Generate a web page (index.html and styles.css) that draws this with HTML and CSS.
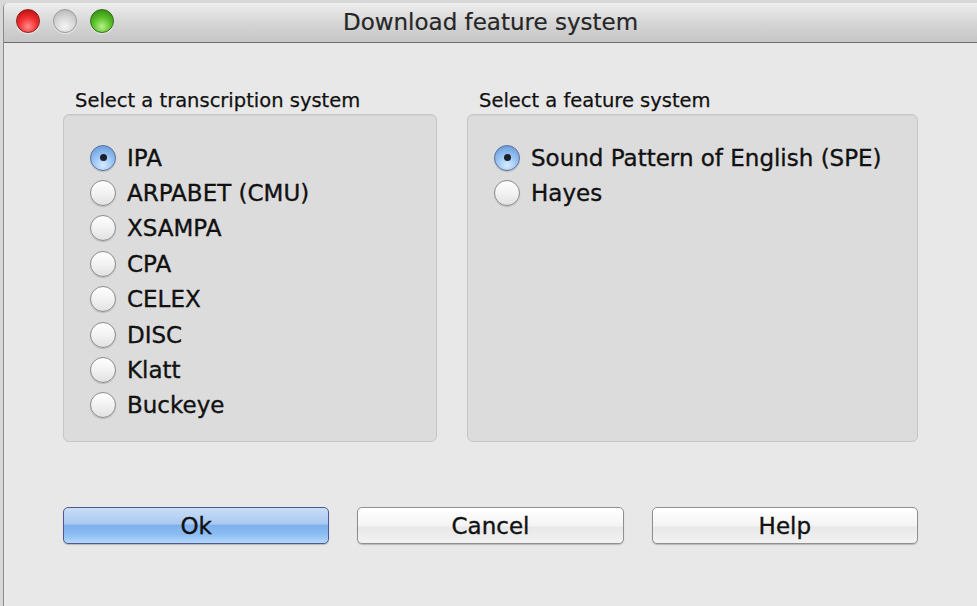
FILE: index.html
```html
<!DOCTYPE html>
<html>
<head>
<meta charset="utf-8">
<link rel="stylesheet" href="styles.css">
</head>
<body>
<div class="window">
  <div class="titlebar">
    <div class="lights">
      <span class="light red"></span>
      <span class="light grey"></span>
      <span class="light green"></span>
    </div>
    <div class="title">Download feature system</div>
  </div>
  <div class="content">
    <div class="groups">
      <div class="group left">
        <div class="group-label">Select a transcription system</div>
        <div class="group-box">
          <div class="radio-row"><span class="radio checked"></span><span>IPA</span></div>
          <div class="radio-row"><span class="radio"></span><span>ARPABET (CMU)</span></div>
          <div class="radio-row"><span class="radio"></span><span>XSAMPA</span></div>
          <div class="radio-row"><span class="radio"></span><span>CPA</span></div>
          <div class="radio-row"><span class="radio"></span><span>CELEX</span></div>
          <div class="radio-row"><span class="radio"></span><span>DISC</span></div>
          <div class="radio-row"><span class="radio"></span><span>Klatt</span></div>
          <div class="radio-row"><span class="radio"></span><span>Buckeye</span></div>
        </div>
      </div>
      <div class="group right">
        <div class="group-label">Select a feature system</div>
        <div class="group-box">
          <div class="radio-row"><span class="radio checked"></span><span>Sound Pattern of English (SPE)</span></div>
          <div class="radio-row"><span class="radio"></span><span>Hayes</span></div>
        </div>
      </div>
    </div>
    <div class="buttons">
      <button class="btn default">Ok</button>
      <button class="btn">Cancel</button>
      <button class="btn">Help</button>
    </div>
  </div>
</div>
</body>
</html>
```

FILE: styles.css
```css
html, body {
  margin: 0;
  padding: 0;
}
body {
  width: 977px;
  height: 606px;
  background: #d8d8d8;
  font-family: "DejaVu Sans", "Lucida Grande", sans-serif;
  color: #111111;
  overflow: hidden;
}
.window {
  margin: 3px 0 0 3px;
  height: 603px;
  background: #e8e8e8;
  border-radius: 5px 0 0 0;
  border-left: 1px solid #8a8a8a;
  box-sizing: border-box;
  overflow: hidden;
}
.titlebar {
  position: relative;
  height: 40px;
  background: linear-gradient(#eeeeee, #d6d6d6 50%, #c6c6c6);
  border-bottom: 1px solid #6f6f6f;
  box-sizing: border-box;
  display: flex;
  align-items: center;
  justify-content: center;
}
.lights {
  position: absolute;
  left: 12px;
  top: 6px;
  display: flex;
  gap: 13px;
}
.light {
  width: 24px;
  height: 24px;
  border-radius: 50%;
  box-sizing: border-box;
  box-shadow: 0 1px 1px rgba(255,255,255,0.6);
}
.red {
  background: radial-gradient(circle at 50% 75%, #ff8a8a 0, #f23030 45%, #b80f0f 90%);
  border: 1px solid #8b2020;
}
.grey {
  background: radial-gradient(circle at 50% 75%, #f4f4f4 0, #d6d6d6 50%, #b5b5b5 90%);
  border: 1px solid #9a9a9a;
}
.green {
  background: radial-gradient(circle at 50% 75%, #b8f08a 0, #5cc02a 45%, #2f8a12 90%);
  border: 1px solid #2f6e1c;
}
.title {
  font-size: 23px;
  color: #262626;
  margin-left: 0;
  margin-top: -2px;
  -webkit-text-stroke: 0.2px #262626;
}
.content {
  padding: 47px 59px 0 59px;
}
.groups {
  display: flex;
  gap: 30px;
}
.group.left { width: 374px; }
.group.right { width: 451px; }
.group-label {
  font-size: 19.5px;
  height: 24px;
  line-height: 22px;
  padding-left: 12px;
  -webkit-text-stroke: 0.25px #111111;
}
.group-box {
  height: 328px;
  background: #dcdcdc;
  border: 1px solid #c6c6c6;
  border-radius: 6px;
  box-sizing: border-box;
  padding: 12px 0 0 26px;
  box-shadow: inset 0 1px 1px rgba(0,0,0,0.05);
}
.radio-row {
  height: 35.4px;
  display: flex;
  align-items: center;
  gap: 11px;
  font-size: 23px;
  -webkit-text-stroke: 0.35px #111111;
}
.group-box .radio-row:first-child { margin-top: 13px; }
.radio {
  width: 26px;
  height: 26px;
  border-radius: 50%;
  box-sizing: border-box;
  border: 1px solid #8c8c8c;
  background: linear-gradient(#ffffff, #f2f2f2 50%, #e2e2e2);
  box-shadow: 0 1px 1px rgba(0,0,0,0.15);
  position: relative;
  flex: none;
  -webkit-text-stroke: 0;
}
.radio.checked {
  border-color: #5a6f9c;
  background: radial-gradient(circle at 50% 80%, #d6ecff 0, #9fc8f5 40%, #6d9fdf 85%);
}
.radio.checked::after {
  content: "";
  position: absolute;
  left: 8.5px;
  top: 8.5px;
  width: 7px;
  height: 7px;
  border-radius: 50%;
  background: #1a1f2e;
}
.buttons {
  display: flex;
  gap: 28px;
  margin-top: 65px;
}
.btn {
  width: 267px;
  height: 37px;
  font-family: "DejaVu Sans", "Lucida Grande", sans-serif;
  font-size: 23px;
  color: #111111;
  -webkit-text-stroke: 0.35px #111111;
  border: 1px solid #8f8f8f;
  border-radius: 5px;
  background: linear-gradient(#ffffff, #f4f4f4 50%, #e8e8e8 55%, #f2f2f2);
  box-shadow: 0 1px 1px rgba(0,0,0,0.2);
  padding: 0;
}
.btn.default {
  border-color: #50588f;
  background: linear-gradient(#c9def7, #a9c9f0 45%, #7fb0ec 50%, #8bbcf2 75%, #b6d9fb);
}
```
